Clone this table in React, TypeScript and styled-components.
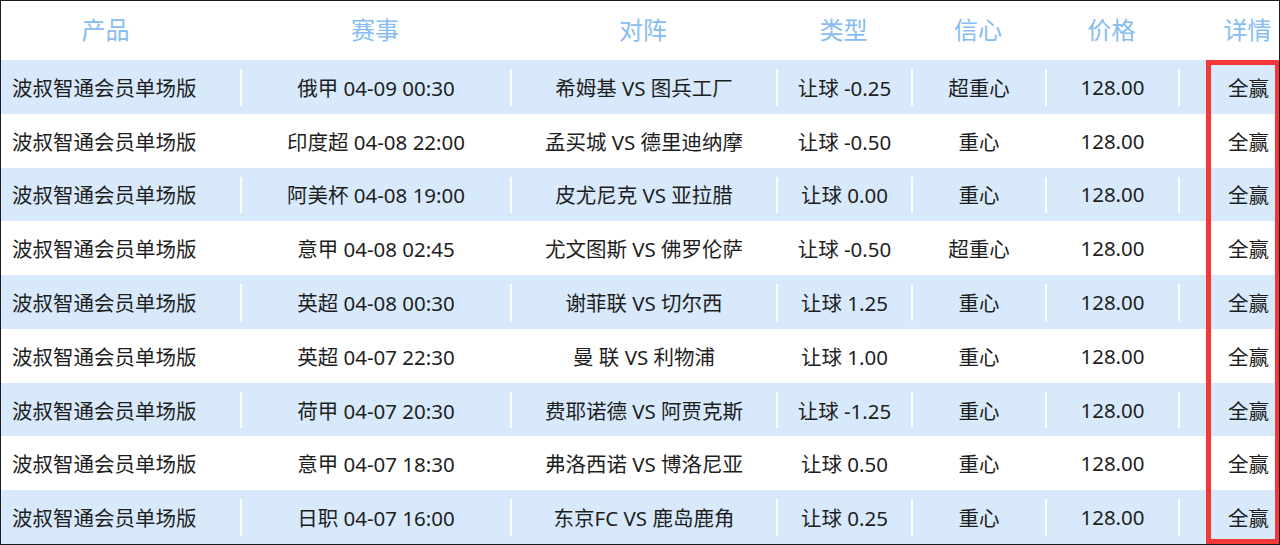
import styled, { createGlobalStyle } from "styled-components";

const GlobalStyle = createGlobalStyle`
  html, body {
    margin: 0;
    padding: 0;
    background: #fff;
  }
  * {
    box-sizing: border-box;
  }
`;

const COLS = "239px 270px 266px 135px 134px 133px 101px";

const Table = styled.div`
  position: relative;
  width: 1280px;
  height: 545px;
  border: 1px solid #1b1b1b;
  display: grid;
  grid-template-rows: 59px repeat(9, 1fr);
  font-family: "Noto Sans", "Noto Sans CJK SC", sans-serif;
  overflow: hidden;
`;

const HeadRow = styled.div`
  display: grid;
  grid-template-columns: ${COLS};
`;

const HeadCell = styled.div<{ $shift?: number }>`
  display: flex;
  align-items: center;
  justify-content: center;
  padding-left: ${(p) => (p.$shift && p.$shift > 0 ? p.$shift * 2 : 0)}px;
  padding-right: ${(p) => (p.$shift && p.$shift < 0 ? -p.$shift * 2 : 0)}px;
  color: #86bcf1;
  font-size: 24px;
  padding-bottom: 4px;
`;

const Row = styled.div<{ $blue: boolean }>`
  display: grid;
  grid-template-columns: ${COLS};
  background: ${(p) => (p.$blue ? "#d7e9fb" : "#fff")};
`;

const Cell = styled.div<{ $left?: boolean; $shift?: number }>`
  display: flex;
  align-items: center;
  justify-content: ${(p) => (p.$left ? "flex-start" : "center")};
  margin: 9px 0 8px;
  padding-left: ${(p) => (p.$left ? 11 : p.$shift ? p.$shift * 2 : 0)}px;
  padding-bottom: 1px;
  color: #1e1e1e;
  font-size: 20.5px;
  white-space: nowrap;

  & + & {
    border-left: 2px solid #fff;
  }
`;

// red annotation frame drawn over the 详情 column
const Mark = styled.div`
  position: absolute;
  left: 1205px;
  top: 59px;
  right: -1px;
  bottom: 0px;
  border: 5px solid #f43838;
  pointer-events: none;
`;

type Pick = {
  league: string;
  match: string;
  kind: string;
  level: string;
};

const picks: Pick[] = [
  { league: "俄甲 04-09 00:30", match: "希姆基 VS 图兵工厂", kind: "让球 -0.25", level: "超重心" },
  { league: "印度超 04-08 22:00", match: "孟买城 VS 德里迪纳摩", kind: "让球 -0.50", level: "重心" },
  { league: "阿美杯 04-08 19:00", match: "皮尤尼克 VS 亚拉腊", kind: "让球 0.00", level: "重心" },
  { league: "意甲 04-08 02:45", match: "尤文图斯 VS 佛罗伦萨", kind: "让球 -0.50", level: "超重心" },
  { league: "英超 04-08 00:30", match: "谢菲联 VS 切尔西", kind: "让球 1.25", level: "重心" },
  { league: "英超 04-07 22:30", match: "曼 联 VS 利物浦", kind: "让球 1.00", level: "重心" },
  { league: "荷甲 04-07 20:30", match: "费耶诺德 VS 阿贾克斯", kind: "让球 -1.25", level: "重心" },
  { league: "意甲 04-07 18:30", match: "弗洛西诺 VS 博洛尼亚", kind: "让球 0.50", level: "重心" },
  { league: "日职 04-07 16:00", match: "东京FC VS 鹿岛鹿角", kind: "让球 0.25", level: "重心" },
];

const heads: [string, number][] = [
  ["产品", -15],
  ["赛事", 0],
  ["对阵", 0],
  ["类型", 0],
  ["信心", 0],
  ["价格", 0],
  ["详情", 19],
];

export default function App() {
  return (
    <>
      <GlobalStyle />
      <Table>
        <HeadRow>
          {heads.map(([t, s]) => (
            <HeadCell key={t} $shift={s}>
              {t}
            </HeadCell>
          ))}
        </HeadRow>
        {picks.map((p, i) => (
          <Row key={i} $blue={i % 2 === 0}>
            <Cell $left>波叔智通会员单场版</Cell>
            <Cell>{p.league}</Cell>
            <Cell>{p.match}</Cell>
            <Cell>{p.kind}</Cell>
            <Cell>{p.level}</Cell>
            <Cell>128.00</Cell>
            <Cell $shift={19}>全赢</Cell>
          </Row>
        ))}
        <Mark />
      </Table>
    </>
  );
}
